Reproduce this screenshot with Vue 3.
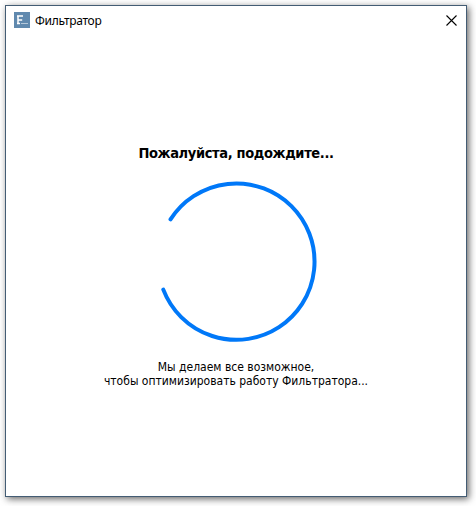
<script setup>
const appName = 'Фильтратор'
const heading = 'Пожалуйста, подождите...'
const lines = ['Мы делаем все возможное,', 'чтобы оптимизировать работу Фильтратора...']
</script>

<template>
  <div class="desktop">
    <section class="window">
      <header class="titlebar">
        <svg class="logo" width="16" height="16" viewBox="0 0 16 16">
          <rect width="16" height="16" fill="#6089ae" />
          <path d="M4 12V4M3 4h6M4 7.9h4.2M3 11.6h3" fill="none" stroke="#fff" stroke-width="1.5" />
          <path d="M7 11.5h7" stroke="#b4c8da" stroke-width="1" />
        </svg>
        <span class="name">{{ appName }}</span>
        <button class="close" aria-label="Закрыть">
          <svg width="11" height="11" viewBox="0 0 11 11">
            <path d="M.5 .5l10 10M10.5 .5l-10 10" stroke="#000" stroke-width="1.1" />
          </svg>
        </button>
      </header>
      <main class="content">
        <h1 class="heading">{{ heading }}</h1>
        <svg class="spinner" width="162" height="162" viewBox="0 0 162 162">
          <path d="M15.5 39.4A78.2 78.2 0 1 1 8.3 109.6" fill="none" stroke="#0078f8" stroke-width="4" stroke-linecap="round" />
        </svg>
        <p class="message">
          <span v-for="line in lines" :key="line" class="line">{{ line }}</span>
        </p>
      </main>
    </section>
  </div>
</template>

<style>
body {
  background: #fff;
  overflow: hidden;
}
</style>

<style scoped>
.desktop {
  box-sizing: border-box;
  width: 476px;
  height: 506px;
  padding: 5px 9px 9px 5px;
  background: #fff;
}
.window {
  box-sizing: border-box;
  width: 462px;
  height: 492px;
  border: 1px solid #435c74;
  background: #fff;
  box-shadow: 2px 2px 7px rgba(0, 0, 0, 0.6);
  font-family: "DejaVu Sans Condensed", "DejaVu Sans", sans-serif;
  color: #000;
}
.titlebar {
  display: flex;
  align-items: center;
  height: 29px;
  padding: 0 9px 0 8px;
}
.logo {
  display: block;
  margin-top: -1px;
}
.name {
  margin-left: 5px;
  font: 12px/16px "Noto Sans", "Open Sans", sans-serif;
  letter-spacing: -0.3px;
}
.close {
  margin-left: auto;
  padding: 0;
  border: 0;
  background: none;
}
.close svg {
  display: block;
}
.content {
  display: flex;
  flex-direction: column;
  align-items: center;
  padding-top: 109px;
}
.heading {
  margin: 0;
  font-size: 14.5px;
  line-height: 18px;
  font-weight: 700;
  font-stretch: condensed;
  letter-spacing: -0.36px;
  white-space: nowrap;
}
.spinner {
  margin-top: 18px;
}
.message {
  margin: 18px 0 0;
  font-size: 12px;
  line-height: 14px;
  text-align: center;
  white-space: nowrap;
}
.line {
  display: block;
}
</style>
